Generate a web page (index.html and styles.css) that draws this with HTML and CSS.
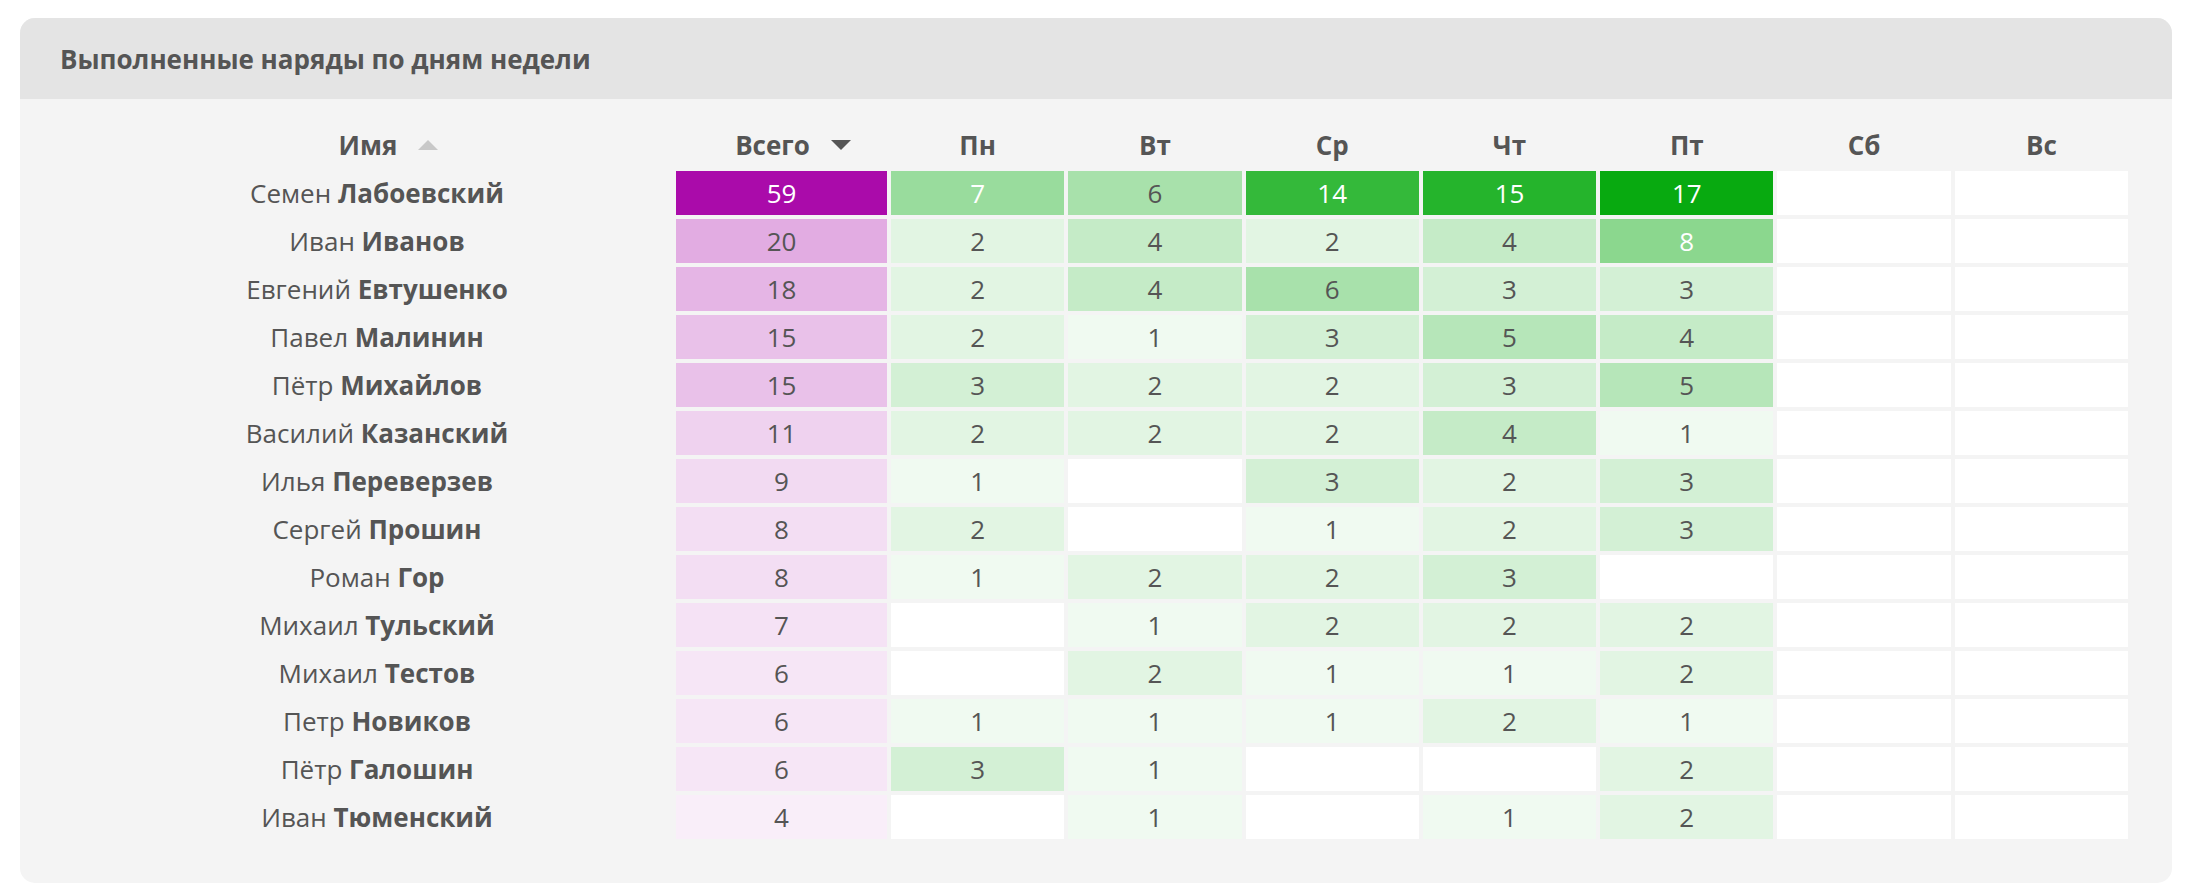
FILE: index.html
```html
<!DOCTYPE html>
<html lang="ru">
<head>
<meta charset="utf-8">
<title>Выполненные наряды по дням недели</title>
<link rel="stylesheet" href="styles.css">
</head>
<body>
<section class="card">
  <header class="card-header">
    <h2 class="card-title">Выполненные наряды по дням недели</h2>
  </header>
  <div class="card-body">
    <div class="grid">
      <div class="th sortable"><span class="th-text">Имя</span><span class="sort sort-up"></span></div>
      <div class="th sortable"><span class="th-text">Всего</span><span class="sort sort-down"></span></div>
      <div class="th">Пн</div>
      <div class="th">Вт</div>
      <div class="th">Ср</div>
      <div class="th">Чт</div>
      <div class="th">Пт</div>
      <div class="th">Сб</div>
      <div class="th">Вс</div>

      <div class="name">Семен <b>Лабоевский</b></div>
      <div class="cell light" style="background:#AA0BAA">59</div>
      <div class="cell light" style="background:#99DC9D">7</div>
      <div class="cell" style="background:#A8E1AB">6</div>
      <div class="cell light" style="background:#34B93A">14</div>
      <div class="cell light" style="background:#25B42C">15</div>
      <div class="cell light" style="background:#08AA10">17</div>
      <div class="cell"></div>
      <div class="cell"></div>

      <div class="name">Иван <b>Иванов</b></div>
      <div class="cell" style="background:#E2ACE2">20</div>
      <div class="cell" style="background:#E2F5E3">2</div>
      <div class="cell" style="background:#C5EBC7">4</div>
      <div class="cell" style="background:#E2F5E3">2</div>
      <div class="cell" style="background:#C5EBC7">4</div>
      <div class="cell light" style="background:#8BD78E">8</div>
      <div class="cell"></div>
      <div class="cell"></div>

      <div class="name">Евгений <b>Евтушенко</b></div>
      <div class="cell" style="background:#E5B5E5">18</div>
      <div class="cell" style="background:#E2F5E3">2</div>
      <div class="cell" style="background:#C5EBC7">4</div>
      <div class="cell" style="background:#A8E1AB">6</div>
      <div class="cell" style="background:#D3F0D5">3</div>
      <div class="cell" style="background:#D3F0D5">3</div>
      <div class="cell"></div>
      <div class="cell"></div>

      <div class="name">Павел <b>Малинин</b></div>
      <div class="cell" style="background:#E9C1E9">15</div>
      <div class="cell" style="background:#E2F5E3">2</div>
      <div class="cell" style="background:#F0FAF1">1</div>
      <div class="cell" style="background:#D3F0D5">3</div>
      <div class="cell" style="background:#B6E6B9">5</div>
      <div class="cell" style="background:#C5EBC7">4</div>
      <div class="cell"></div>
      <div class="cell"></div>

      <div class="name">Пётр <b>Михайлов</b></div>
      <div class="cell" style="background:#E9C1E9">15</div>
      <div class="cell" style="background:#D3F0D5">3</div>
      <div class="cell" style="background:#E2F5E3">2</div>
      <div class="cell" style="background:#E2F5E3">2</div>
      <div class="cell" style="background:#D3F0D5">3</div>
      <div class="cell" style="background:#B6E6B9">5</div>
      <div class="cell"></div>
      <div class="cell"></div>

      <div class="name">Василий <b>Казанский</b></div>
      <div class="cell" style="background:#EFD2EF">11</div>
      <div class="cell" style="background:#E2F5E3">2</div>
      <div class="cell" style="background:#E2F5E3">2</div>
      <div class="cell" style="background:#E2F5E3">2</div>
      <div class="cell" style="background:#C5EBC7">4</div>
      <div class="cell" style="background:#F0FAF1">1</div>
      <div class="cell"></div>
      <div class="cell"></div>

      <div class="name">Илья <b>Переверзев</b></div>
      <div class="cell" style="background:#F2DAF2">9</div>
      <div class="cell" style="background:#F0FAF1">1</div>
      <div class="cell"></div>
      <div class="cell" style="background:#D3F0D5">3</div>
      <div class="cell" style="background:#E2F5E3">2</div>
      <div class="cell" style="background:#D3F0D5">3</div>
      <div class="cell"></div>
      <div class="cell"></div>

      <div class="name">Сергей <b>Прошин</b></div>
      <div class="cell" style="background:#F3DEF3">8</div>
      <div class="cell" style="background:#E2F5E3">2</div>
      <div class="cell"></div>
      <div class="cell" style="background:#F0FAF1">1</div>
      <div class="cell" style="background:#E2F5E3">2</div>
      <div class="cell" style="background:#D3F0D5">3</div>
      <div class="cell"></div>
      <div class="cell"></div>

      <div class="name">Роман <b>Гор</b></div>
      <div class="cell" style="background:#F3DEF3">8</div>
      <div class="cell" style="background:#F0FAF1">1</div>
      <div class="cell" style="background:#E2F5E3">2</div>
      <div class="cell" style="background:#E2F5E3">2</div>
      <div class="cell" style="background:#D3F0D5">3</div>
      <div class="cell"></div>
      <div class="cell"></div>
      <div class="cell"></div>

      <div class="name">Михаил <b>Тульский</b></div>
      <div class="cell" style="background:#F5E2F5">7</div>
      <div class="cell"></div>
      <div class="cell" style="background:#F0FAF1">1</div>
      <div class="cell" style="background:#E2F5E3">2</div>
      <div class="cell" style="background:#E2F5E3">2</div>
      <div class="cell" style="background:#E2F5E3">2</div>
      <div class="cell"></div>
      <div class="cell"></div>

      <div class="name">Михаил <b>Тестов</b></div>
      <div class="cell" style="background:#F6E6F6">6</div>
      <div class="cell"></div>
      <div class="cell" style="background:#E2F5E3">2</div>
      <div class="cell" style="background:#F0FAF1">1</div>
      <div class="cell" style="background:#F0FAF1">1</div>
      <div class="cell" style="background:#E2F5E3">2</div>
      <div class="cell"></div>
      <div class="cell"></div>

      <div class="name">Петр <b>Новиков</b></div>
      <div class="cell" style="background:#F6E6F6">6</div>
      <div class="cell" style="background:#F0FAF1">1</div>
      <div class="cell" style="background:#F0FAF1">1</div>
      <div class="cell" style="background:#F0FAF1">1</div>
      <div class="cell" style="background:#E2F5E3">2</div>
      <div class="cell" style="background:#F0FAF1">1</div>
      <div class="cell"></div>
      <div class="cell"></div>

      <div class="name">Пётр <b>Галошин</b></div>
      <div class="cell" style="background:#F6E6F6">6</div>
      <div class="cell" style="background:#D3F0D5">3</div>
      <div class="cell" style="background:#F0FAF1">1</div>
      <div class="cell"></div>
      <div class="cell"></div>
      <div class="cell" style="background:#E2F5E3">2</div>
      <div class="cell"></div>
      <div class="cell"></div>

      <div class="name">Иван <b>Тюменский</b></div>
      <div class="cell" style="background:#F9EEF9">4</div>
      <div class="cell"></div>
      <div class="cell" style="background:#F0FAF1">1</div>
      <div class="cell"></div>
      <div class="cell" style="background:#F0FAF1">1</div>
      <div class="cell" style="background:#E2F5E3">2</div>
      <div class="cell"></div>
      <div class="cell"></div>
    </div>
  </div>
</section>
</body>
</html>
```
FILE: styles.css
```css
* {
  box-sizing: border-box;
}

html, body {
  margin: 0;
  padding: 0;
  background: #ffffff;
}

body {
  font-family: "Open Sans", "Noto Sans", "Liberation Sans", sans-serif;
  color: #555555;
  padding: 18px 18px 13px 20px;
}

.card {
  background: #f4f4f4;
  border-radius: 15px;
  overflow: hidden;
}

.card-header {
  height: 81px;
  background: #e4e4e4;
  display: flex;
  align-items: center;
  padding-left: 40px;
}

.card-title {
  margin: 0;
  font-size: 26px;
  font-weight: 700;
  color: #555555;
  line-height: 1;
}

.card-body {
  padding: 24px 44px 44px 62px;
}

.grid {
  display: grid;
  grid-template-columns: 590px 211px repeat(7, 1fr);
  grid-auto-rows: 44px;
  gap: 4px;
}

.th {
  display: flex;
  align-items: center;
  justify-content: center;
  font-size: 26px;
  font-weight: 700;
  line-height: 44px;
  color: #555555;
}

.th.sortable {
  padding-right: 18px;
}

.sort {
  width: 0;
  height: 0;
  margin-left: 21px;
  margin-right: -41px;
  border-left: 10px solid transparent;
  border-right: 10px solid transparent;
}

.sort-up {
  border-bottom: 10px solid #c8c8c8;
}

.sort-down {
  border-top: 10px solid #555555;
}

.name {
  text-align: center;
  font-size: 26px;
  line-height: 44px;
  white-space: nowrap;
  color: #555555;
}

.name b {
  font-weight: 700;
}

.cell {
  background: #ffffff;
  text-align: center;
  font-size: 26px;
  line-height: 44px;
  color: #555555;
}

.cell.light {
  color: #ffffff;
}
```
